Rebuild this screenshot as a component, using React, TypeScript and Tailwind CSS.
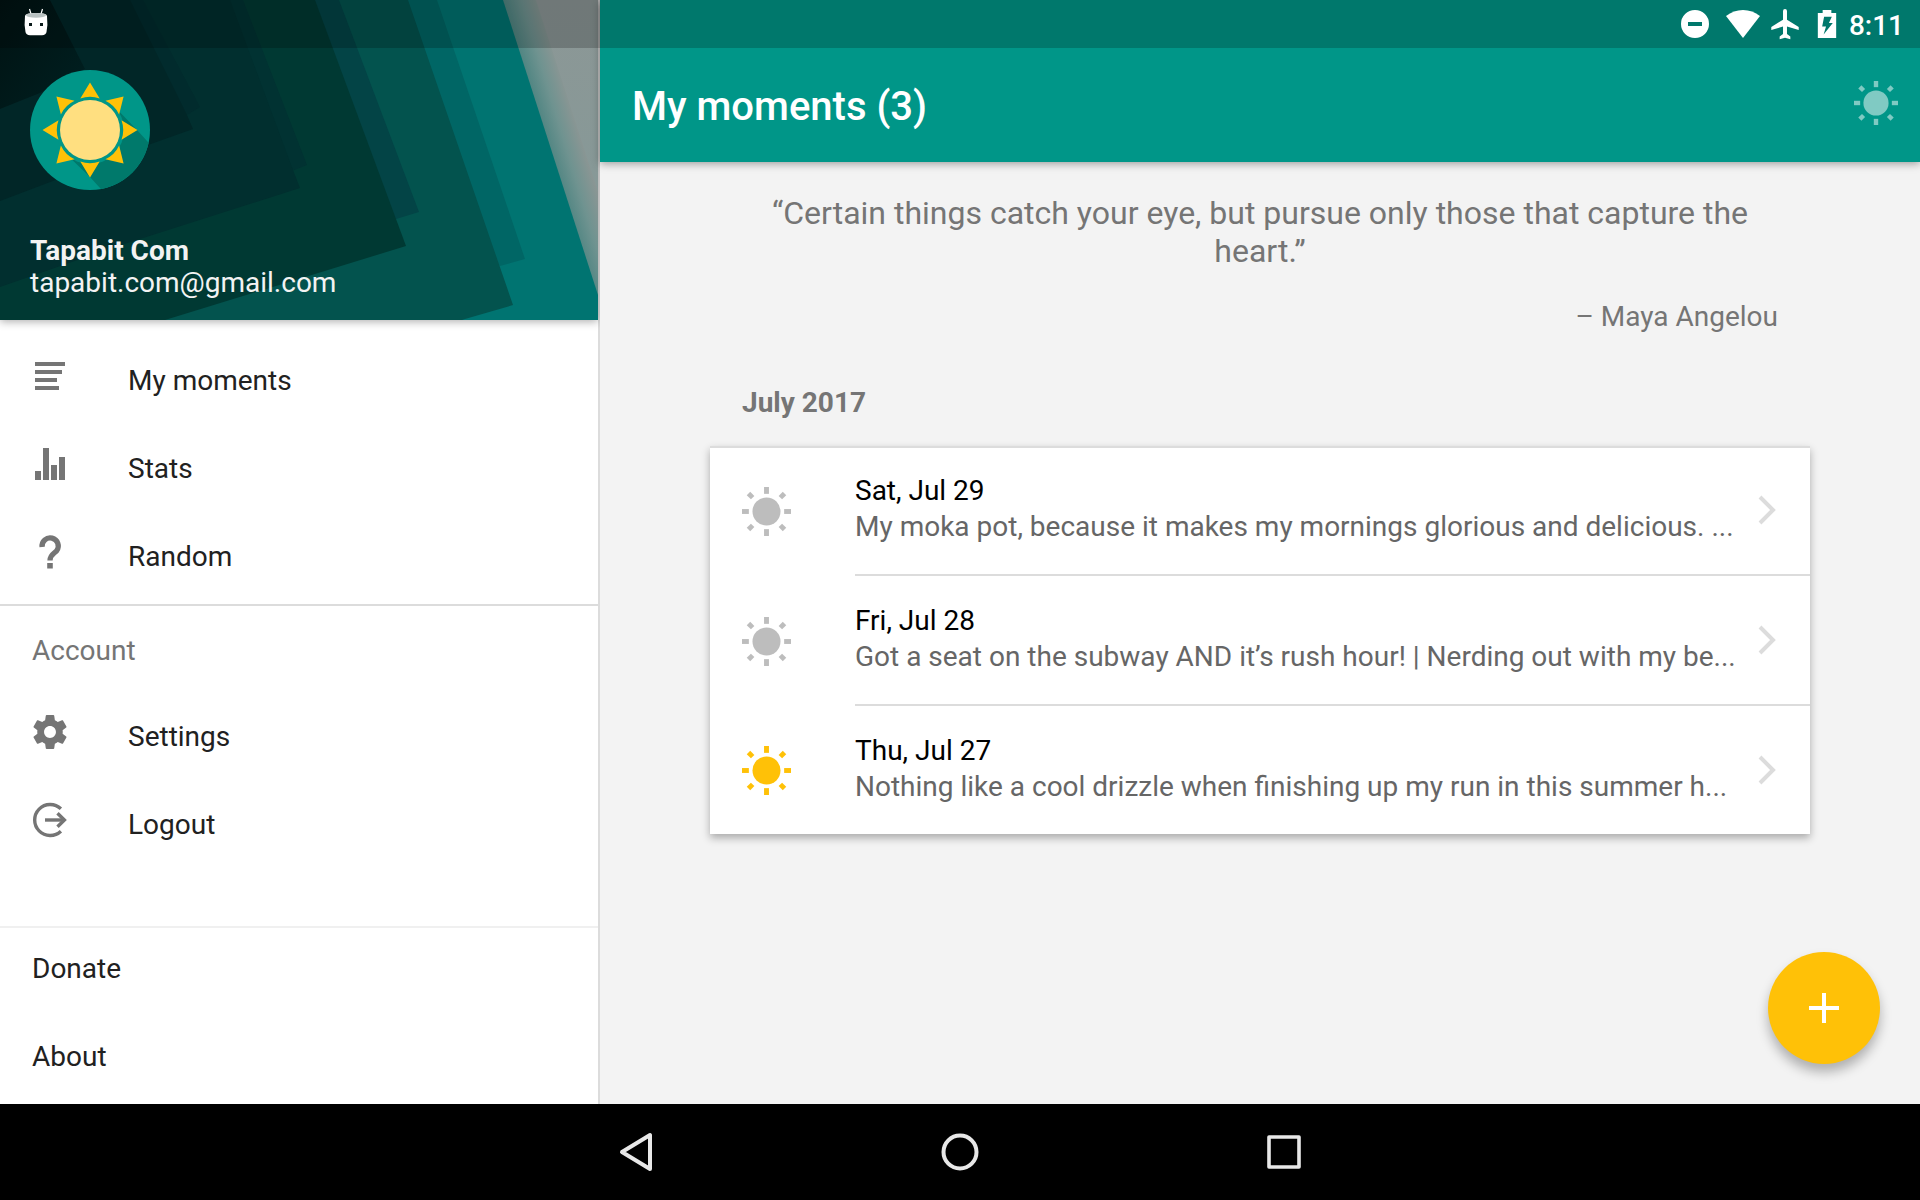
import type { ReactNode } from "react";

const rayAngles = [0, 45, 90, 135, 180, 225, 270, 315];

function SunIcon({ className }: { className: string }) {
  return (
    <svg viewBox="0 0 50 50" className={className} fill="currentColor" aria-hidden="true">
      <circle cx="25" cy="25" r="14.3" />
      {[0, 90, 180, 270].map((a) => (
        <rect key={a} x="22.5" y="0" width="5" height="7" transform={`rotate(${a} 25 25)`} />
      ))}
      {[45, 135, 225, 315].map((a) => (
        <rect key={a} x="22.5" y="-1" width="5" height="6" transform={`rotate(${a} 25 25)`} />
      ))}
    </svg>
  );
}

function Avatar() {
  return (
    <svg viewBox="0 0 120 120" className="size-30" role="img" aria-label="Profile picture">
      <defs>
        <clipPath id="avatar-disc">
          <circle cx="60" cy="60" r="60" />
        </clipPath>
      </defs>
      <g clipPath="url(#avatar-disc)">
        <rect width="120" height="120" fill="#009688" />
        <path d="M60 107 90 140H140V96L107 60 84 36 36 84Z" fill="#00796b" />
        <circle cx="60" cy="60" r="34" fill="#009688" />
      </g>
      {rayAngles.map((a) => (
        <path key={a} d="M60 12.5 69.7 28.5Q60 25 50.3 28.5Z" fill="#ffc107" transform={`rotate(${a} 60 60)`} />
      ))}
      <circle cx="60" cy="60" r="30" fill="#ffdf80" />
    </svg>
  );
}

function HeaderArt() {
  return (
    <svg
      viewBox="0 0 598 320"
      preserveAspectRatio="xMidYMid slice"
      className="absolute inset-0 size-full"
      aria-hidden="true"
    >
      <defs>
        <linearGradient id="sheet" x1="0" y1="0" x2="0" y2="1">
          <stop offset="0" stopColor="#8c9796" />
          <stop offset="1" stopColor="#839a98" />
        </linearGradient>
        <linearGradient id="haze" gradientUnits="userSpaceOnUse" x1="525" y1="72" x2="558" y2="62">
          <stop offset="0" stopColor="#4f8582" />
          <stop offset="0.5" stopColor="#6f9390" />
          <stop offset="1" stopColor="#8a9694" />
        </linearGradient>
        <linearGradient id="ink" x1="0" y1="0" x2="1" y2="1">
          <stop offset="0" stopColor="#001212" />
          <stop offset="1" stopColor="#002021" />
        </linearGradient>
      </defs>
      <rect width="598" height="320" fill="url(#sheet)" />
      <path d="M500 0H536L598 192V320H500Z" fill="url(#haze)" />
      <path d="M0 0H503L598 295V320H0Z" fill="#007471" />
      <path d="M0 0H437L525 259 500 266Z" fill="#006665" />
      <path d="M0 0H408L513 305 465 319 462 320H0Z" fill="#03534e" />
      <path d="M0 0H339L419 212 396 219Z" fill="#034446" />
      <path d="M0 0H315L406 246 165 320H0Z" fill="#003933" />
      <path d="M0 0H243L307 165 292 171Z" fill="#013232" />
      <path d="M0 0H230L293 170 300 188 115 247 0 287Z" fill="#012f2f" />
      <path d="M0 0H143L200 107 187 115Z" fill="#012b2d" />
      <path d="M0 0H130L187 115 193 129 148 145 0 201Z" fill="#012627" />
      <path d="M0 0H50L85 69 40 93 0 109Z" fill="url(#ink)" />
    </svg>
  );
}

const gearPath =
  "M19.43 12.98c.04-.32.07-.64.07-.98s-.03-.66-.07-.98l2.11-1.65c.19-.15.24-.42.12-.64l-2-3.46c-.12-.22-.39-.3-.61-.22l-2.49 1c-.52-.4-1.08-.73-1.69-.98l-.38-2.65C14.46 2.18 14.25 2 14 2h-4c-.25 0-.46.18-.49.42l-.38 2.65c-.61.25-1.17.59-1.69.98l-2.49-1c-.23-.09-.49 0-.61.22l-2 3.46c-.13.22-.07.49.12.64l2.11 1.65c-.04.32-.07.65-.07.98s.03.66.07.98l-2.11 1.65c-.19.15-.24.42-.12.64l2 3.46c.12.22.39.3.61.22l2.49-1c.52.4 1.08.73 1.69.98l.38 2.65c.03.24.24.42.49.42h4c.25 0 .46-.18.49-.42l.38-2.65c.61-.25 1.17-.59 1.69-.98l2.49 1c.23.09.49 0 .61-.22l2-3.46c.12-.22.07-.49-.12-.64l-2.11-1.65zM12 15.5c-1.93 0-3.5-1.57-3.5-3.5s1.57-3.5 3.5-3.5 3.5 1.57 3.5 3.5-1.57 3.5-3.5 3.5z";

function ListIcon() {
  return (
    <svg viewBox="0 0 36 36" className="size-9" fill="currentColor" aria-hidden="true">
      <path d="M3 4h30v4H3zM3 12h27v4H3zM3 20h22v4H3zM3 28h24v4H3z" />
    </svg>
  );
}

function StatsIcon() {
  return (
    <svg viewBox="0 0 36 36" className="size-9" fill="currentColor" aria-hidden="true">
      <path d="M3 25h6v9H3zM11 2h6v32h-6zM19 19h6v15h-6zM27 11h6v23h-6z" />
    </svg>
  );
}

function QuestionIcon() {
  return (
    <svg viewBox="0 0 36 36" className="size-9" fill="none" aria-hidden="true">
      <path d="M10.1 13a8.1 8.1 0 1 1 14.6 3.7C22.4 19.4 18 20.6 18 26.5" stroke="currentColor" strokeWidth="5.3" />
      <path d="M15.2 29h5.6v5.5h-5.6z" fill="currentColor" />
    </svg>
  );
}

function GearIcon() {
  return (
    <svg viewBox="1.4 1.4 21.2 21.2" className="size-9" fill="currentColor" aria-hidden="true">
      <path d={gearPath} />
    </svg>
  );
}

function LogoutIcon() {
  return (
    <svg viewBox="0 0 36 36" className="size-9" fill="none" stroke="currentColor" strokeWidth="3.4" aria-hidden="true">
      <path d="M28.9 6.8A15.5 15.5 0 1 0 28.9 29.2" />
      <path d="M13 18h19" />
      <path d="M25.5 11.2 32.4 18 25.5 24.8" />
    </svg>
  );
}

function MenuRow({ icon, label }: { icon?: ReactNode; label: string }) {
  return (
    <li>
      <button
        type="button"
        className={
          icon
            ? "flex h-22 w-full items-center px-8 pt-0.5 text-left text-[#212121]"
            : "flex h-22 w-full items-center px-8 pb-1.5 text-left text-[#212121]"
        }
      >
        {icon && <span className="mr-15 pb-2.5 text-[#757575]">{icon}</span>}
        <span>{label}</span>
      </button>
    </li>
  );
}

function StatusBar() {
  return (
    <div className="absolute inset-x-0 top-0 flex h-12 items-center justify-between bg-black/20 pr-4 pl-6 text-white">
      <svg viewBox="0 0 24 28" className="mb-1 h-7 w-6" aria-hidden="true">
        <path d="M5.5 1 7 6M18.5 1 17 6" stroke="#fff" strokeWidth="1.2" />
        <path d="M1 8Q1 5 12 5T23 8Q24 17 22.5 24 22 27 18 27.3H6Q2 27 1.5 24 0 17 1 8Z" fill="#fff" />
        <ellipse cx="12" cy="7.3" rx="10" ry="2.4" fill="#b9c2c2" />
        <path d="M5 15h3v3H5zM16 15h3v3h-3z" fill="#0a1a1a" />
      </svg>
      <div className="flex items-center">
        <svg viewBox="0 0 28 28" className="mr-4 size-7" aria-hidden="true">
          <path
            fillRule="evenodd"
            fill="currentColor"
            d="M14 0a14 14 0 1 0 0 28 14 14 0 0 0 0-28ZM7 12h14v4H7Z"
          />
        </svg>
        <svg viewBox="0 0 36 28" className="mr-2 h-7 w-9" fill="currentColor" aria-hidden="true">
          <path d="M18 28 1 6Q8.500 0 18 0T35 6Z" />
        </svg>
        <svg viewBox="2 1.5 20 21" className="mr-4 h-8 w-8" fill="currentColor" aria-hidden="true">
          <path d="M21 16v-2l-7.7-4.8V3.5a1.3 1.3 0 0 0-2.6 0v5.7L3 14v2l7.7-2.4V18.5L8.5 20.2V22l3.5-1 3.5 1v-1.8l-2.2-1.7v-4.9z" />
        </svg>
        <svg viewBox="0 0 19 29" className="mr-3 h-7 w-5" fill="currentColor" aria-hidden="true">
          <path fillRule="evenodd" d="M5 0h9v3h5v26H0V3h5ZM6.5 7 4.500 17H8.5L6 25.5 15.5 13.5H11.5L14.5 7Z" />
        </svg>
        <span className="pt-1 leading-8 font-medium">8:11</span>
      </div>
    </div>
  );
}

function Sidebar() {
  return (
    <aside className="flex w-5/16 flex-col border-r-2 border-[#dcdcdc] bg-white">
      <div className="relative flex h-80 flex-col justify-end px-[30px] pb-[21px] text-[#f3f3f3] shadow-[0_2px_8px_rgba(0,0,0,0.3)]">
        <HeaderArt />
        <div className="relative">
          <Avatar />
          <p className="mt-[45px] font-bold">Tapabit Com</p>
          <p>tapabit.com@gmail.com</p>
        </div>
      </div>
      <nav className="flex grow flex-col" aria-label="Main">
        <ul className="mt-4 border-b-2 border-[#dcdcdc] pb-1">
          <MenuRow icon={<ListIcon />} label="My moments" />
          <MenuRow icon={<StatsIcon />} label="Stats" />
          <MenuRow icon={<QuestionIcon />} label="Random" />
        </ul>
        <h2 className="flex h-[86px] items-center px-8 pt-1 text-[#757575]">Account</h2>
        <ul>
          <MenuRow icon={<GearIcon />} label="Settings" />
          <MenuRow icon={<LogoutIcon />} label="Logout" />
        </ul>
        <ul className="mt-auto border-t-2 border-[#f0f0f0]">
          <MenuRow label="Donate" />
          <MenuRow label="About" />
        </ul>
      </nav>
    </aside>
  );
}

const moments = [
  {
    date: "Sat, Jul 29",
    text: "My moka pot, because it makes my mornings glorious and delicious. ...",
    today: false,
  },
  {
    date: "Fri, Jul 28",
    text: "Got a seat on the subway AND it’s rush hour! | Nerding out with my be...",
    today: false,
  },
  {
    date: "Thu, Jul 27",
    text: "Nothing like a cool drizzle when finishing up my run in this summer h...",
    today: true,
  },
];

function MomentRow({ moment, last }: { moment: (typeof moments)[number]; last: boolean }) {
  return (
    <li>
      <a href="#moment" className="flex items-center pl-8">
        <SunIcon
          className={moment.today ? "size-[49px] shrink-0 text-[#ffc107]" : "size-[49px] shrink-0 text-[#bdbdbd]"}
        />
        <div
          className={
            last
              ? "ml-16 flex h-32 min-w-0 grow items-center"
              : "ml-16 flex h-[130px] min-w-0 grow items-center border-b-2 border-[#dcdcdc]"
          }
        >
          <div className="min-w-0 grow pb-0.5 leading-9">
            <p className="truncate text-black">{moment.date}</p>
            <p className="truncate text-[#666]">{moment.text}</p>
          </div>
          <svg viewBox="0 0 18 30" className="mr-[34px] ml-5 h-[30px] w-[18px] shrink-0" fill="none" aria-hidden="true">
            <path d="M2 2 15 15 2 28" stroke="#dcdcdc" strokeWidth="4" />
          </svg>
        </div>
      </a>
    </li>
  );
}

function Moments() {
  return (
    <main className="relative flex min-w-0 grow flex-col bg-[#f3f3f3]">
      <header className="flex items-center justify-between bg-[#009688] pt-12 pr-[22px] pl-8 text-white shadow-[0_2px_8px_rgba(0,0,0,0.35)]">
        <h1 className="pt-1 text-[40px] leading-[110px] font-medium">My moments (3)</h1>
        <button type="button" aria-label="Highlights" className="mb-1">
          <SunIcon className="size-11 opacity-50" />
        </button>
      </header>
      <div className="mx-auto w-5/6">
        <blockquote className="px-8 text-[#757575]">
          <p className="mt-8 text-center text-[32px] leading-[38px]">
            “Certain things catch your eye, but pursue only those that capture the heart.”
          </p>
          <footer className="mt-7 text-right leading-[38px]">– Maya Angelou</footer>
        </blockquote>
        <h2 className="mt-12 px-8 leading-[38px] font-bold text-[#757575]">July 2017</h2>
        <ul className="mt-6 bg-white shadow-[inset_0_2px_0_#dcdcdc,0_4px_8px_rgba(0,0,0,0.3)]">
          {moments.map((m, i) => (
            <MomentRow key={m.date} moment={m} last={i === moments.length - 1} />
          ))}
        </ul>
      </div>
      <button
        type="button"
        aria-label="Add moment"
        className="absolute right-10 bottom-10 flex size-28 items-center justify-center rounded-full bg-[#ffc107] shadow-[0_8px_12px_rgba(0,0,0,0.28)]"
      >
        <svg viewBox="0 0 30 30" className="size-[30px]" fill="#fff" aria-hidden="true">
          <path d="M13 0h4v13h13v4H17v13h-4V17H0v-4h13z" />
        </svg>
      </button>
    </main>
  );
}

function NavigationBar() {
  return (
    <nav className="flex h-24 justify-center bg-black" aria-label="System">
      <button type="button" aria-label="Back" className="flex w-81 items-center justify-center">
        <svg viewBox="0 0 40 40" className="size-10" fill="none" stroke="#e8e8e8" strokeWidth="4" strokeLinejoin="round" aria-hidden="true">
          <path d="M34 3V37L6 20Z" />
        </svg>
      </button>
      <button type="button" aria-label="Home" className="flex w-81 items-center justify-center">
        <svg viewBox="0 0 40 40" className="size-10" fill="none" stroke="#e8e8e8" strokeWidth="4" aria-hidden="true">
          <circle cx="20" cy="20" r="16.5" />
        </svg>
      </button>
      <button type="button" aria-label="Recent apps" className="flex w-81 items-center justify-center">
        <svg viewBox="0 0 40 40" className="size-10" fill="none" stroke="#e8e8e8" strokeWidth="3.6" strokeLinejoin="round" aria-hidden="true">
          <path d="M5 5H35V35H5Z" />
        </svg>
      </button>
    </nav>
  );
}

export default function App() {
  return (
    <div className="relative flex min-h-screen flex-col font-['Roboto',sans-serif] text-[28px] leading-8">
      <div className="flex grow">
        <Sidebar />
        <Moments />
      </div>
      <NavigationBar />
      <StatusBar />
    </div>
  );
}
